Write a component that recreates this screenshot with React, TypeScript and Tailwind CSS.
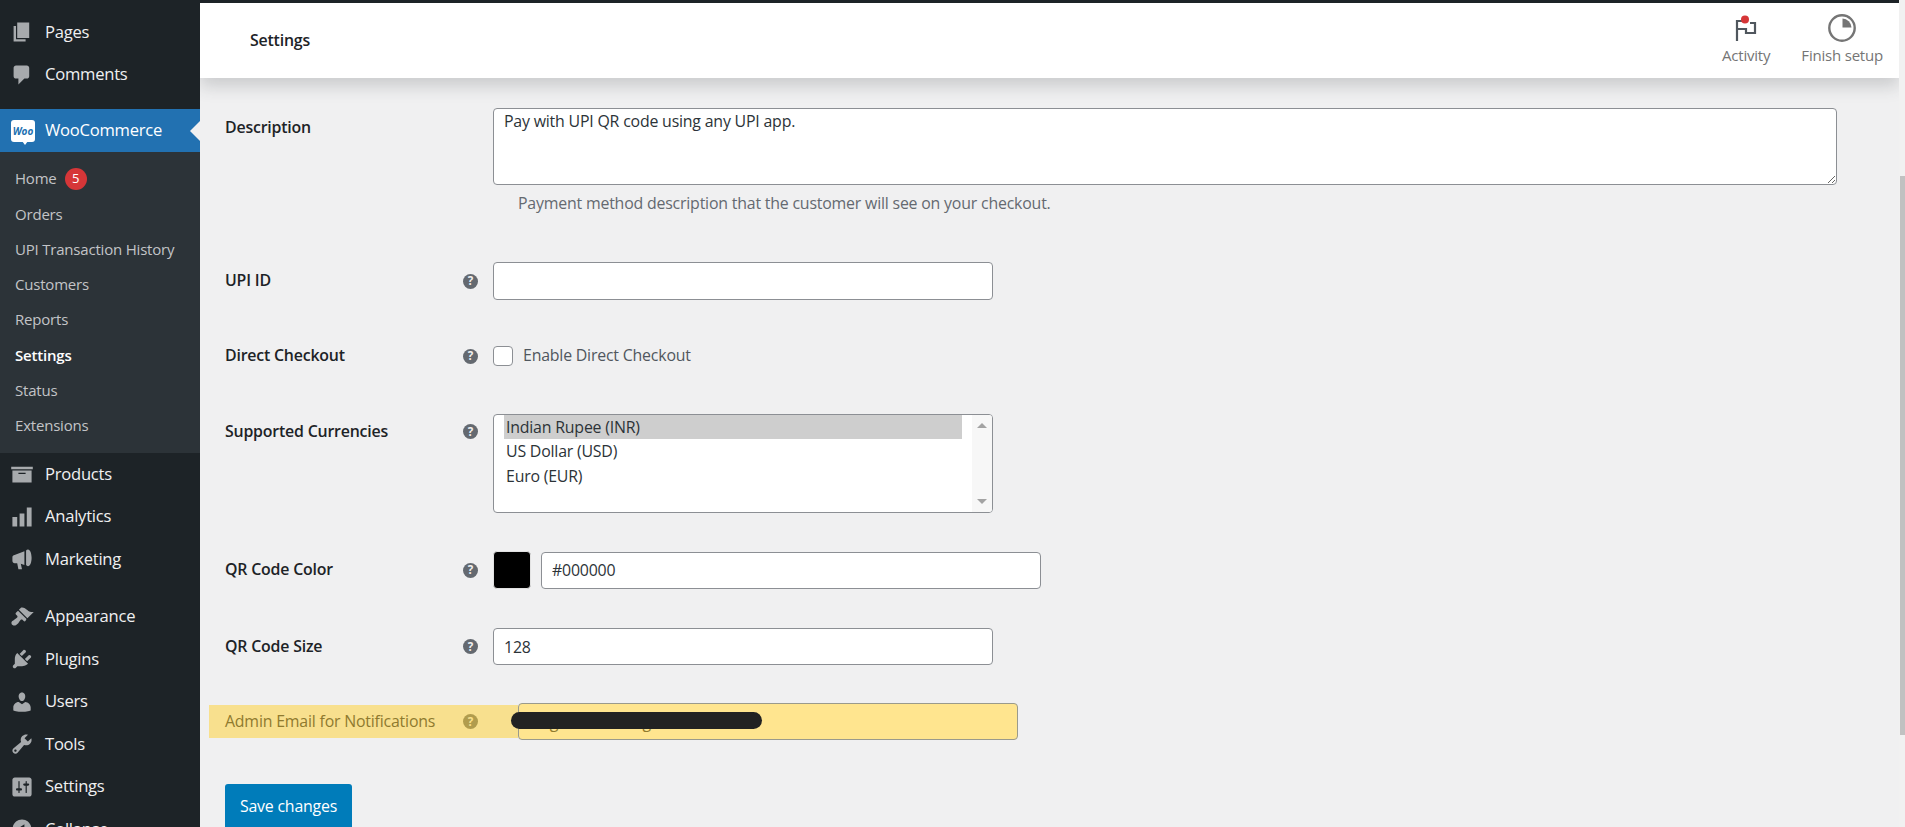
import React from 'react';

const icons: Record<string, string> = {
  pages: 'M6 15V2h10v13H6zm-1 1h8v2H3V5h2v11z',
  comments: 'M5 2h9c1.1 0 2 .9 2 2v7c0 1.1-.9 2-2 2h-2l-5 5v-5H5c-1.1 0-2-.9-2-2V4c0-1.1.9-2 2-2z',
  products: 'M19 4v2H1V4h18zM2 7h16v10H2V7zm11 3V9H7v1h6z',
  analytics: 'M18 18V2h-4v16h4zm-6 0V7H8v11h4zm-6 0v-8H2v8h4z',
  marketing:
    'M2 8.5C2 7.5 2.8 6.700 3.800 6.700L12 3.500V15L9 14l1 4.500H7L6 13.500H3.800C2.800 13.500 2 12.500 2 11.500zM15 2c1.800 0 3 3.200 3 7s-1.200 7-3 7c-.6 0-1.200-.3-1.600-.9V2.900C13.800 2.300 14.400 2 15 2z',
  appearance:
    'M14.48 11.06L7.41 3.99l1.5-1.5c.5-.56 2.3-.47 3.51.32 1.21.8 1.43 1.28 2.91 2.1 1.18.64 2.45 1.26 4.45.85zm-.71.71L6.7 4.7 4.93 6.47c-.39.39-.39 1.02 0 1.41l1.06 1.06c.39.39.39 1.03 0 1.42-.6.6-1.43 1.11-2.21 1.69-.35.26-.7.53-1.01.84C1.43 13.23.99 14.22 1.25 15.5c.1.5.3.88.52 1.06.18.22.56.42 1.06.52 1.28.26 2.27-.18 3.61-1.52.31-.31.58-.66.84-1.01.58-.78 1.09-1.61 1.69-2.21.39-.39 1.03-.39 1.42 0l1.06 1.06c.39.39 1.02.39 1.41 0z',
  plugins:
    'M13.11 4.36L9.87 7.6 8 5.73l3.24-3.24c.35-.34 1.05-.2 1.56.32.52.51.66 1.21.31 1.55zm-8 1.77l.91-1.12 9.01 9.01-1.19.84c-.71.71-2.63 1.16-3.82 1.16H6.14L4.9 17.26c-.59.59-1.54.59-2.12 0-.59-.58-.59-1.53 0-2.12l1.24-1.24v-3.88c0-1.13.4-3.19 1.09-3.89zm7.26 3.97l3.24-3.24c.34-.35 1.04-.21 1.55.31.52.51.66 1.21.31 1.55l-3.24 3.25z',
  users:
    'M10 9.25c-2.27 0-2.73-3.44-2.73-3.44C7 4.02 7.82 2 9.97 2c2.16 0 2.98 2.02 2.71 3.81 0 0-.41 3.44-2.68 3.44zm0 2.57L12.72 10c2.39 0 4.52 2.33 4.52 4.53v2.49s-3.65 1.13-7.24 1.13c-3.65 0-7.24-1.13-7.24-1.13v-2.49c0-2.25 1.94-4.48 4.47-4.48z',
  tools:
    'M16.68 9.77c-1.34 1.34-3.3 1.67-4.95.99l-5.41 6.52c-.99.99-2.59.99-3.58 0s-.99-2.59 0-3.57l6.52-5.42c-.68-1.65-.35-3.61.99-4.95 1.28-1.28 3.12-1.62 4.72-1.06l-2.89 2.89 2.82 2.82 2.86-2.87c.53 1.58.18 3.39-1.08 4.65zM3.81 16.21c.4.39 1.04.39 1.43 0 .4-.4.4-1.04 0-1.43-.39-.4-1.03-.4-1.43 0-.39.39-.39 1.03 0 1.43z',
  settings:
    'M18 16V4c0-1.1-.9-2-2-2H4c-1.1 0-2 .9-2 2v12c0 1.1.9 2 2 2h12c1.1 0 2-.9 2-2zM8 11h1c.55 0 1 .45 1 1s-.45 1-1 1H8v1.5c0 .28-.22.5-.5.5s-.5-.22-.5-.5V13H6c-.55 0-1-.45-1-1s.45-1 1-1h1V5.500c0-.28.22-.5.5-.5s.5.22.5.5V11zm5-2h-1c-.55 0-1-.45-1-1s.45-1 1-1h1V5.500c0-.28.22-.5.5-.5s.5.22.5.5V7h1c.55 0 1 .45 1 1s-.45 1-1 1h-1v5.500c0 .28-.22.5-.5.5s-.5-.22-.5-.5V9z',
  collapse: 'M10 2.160c4.330 0 7.840 3.510 7.840 7.840s-3.510 7.840-7.840 7.840S2.160 14.330 2.160 10 5.670 2.160 10 2.160zM12 14V6l-6 4z',
};

const subItems = ['Orders', 'UPI Transaction History', 'Customers', 'Reports', 'Settings', 'Status', 'Extensions'];

const MenuRow = ({ icon, label }: { icon: string; label: string }) => (
  <div className="flex items-center h-[42.5px] pl-[10px] shrink-0">
    <svg viewBox="0 0 20 20" className="w-[24px] h-[24px] fill-[#a7aaad] shrink-0">
      <path d={icons[icon]} />
    </svg>
    <span className="ml-[11px] text-[16.6px] tracking-[-0.25px] text-[#f0f0f1]">{label}</span>
  </div>
);

const Help = ({ muted }: { muted?: boolean }) => (
  <div className="w-[30px] shrink-0">
    <div
      className={`w-[15px] h-[15px] rounded-full flex items-center justify-center text-[11.5px] leading-none font-bold ${
        muted ? 'bg-[#b19c4d] text-[#f8e08e]' : 'bg-[#646970] text-[#f0f0f1]'
      }`}
    >
      ?
    </div>
  </div>
);

const Label = ({ children }: { children: React.ReactNode }) => (
  <div className="w-[263px] pl-[25px] shrink-0 text-[15.9px] tracking-[-0.2px] font-semibold text-[#1d2327]">{children}</div>
);

const inputClass =
  'w-[500px] h-[37px] px-[10px] rounded-[4px] border border-[#8c8f94] bg-white text-[15.9px] tracking-[-0.2px] text-[#2c3338]';

export default function App() {
  return (
    <div className="flex w-[1905px] h-[827px] overflow-hidden bg-[#f0f0f1] font-['Open_Sans',sans-serif]">
      {/* admin menu */}
      <div className="w-[200px] h-full shrink-0 bg-[#1d2327] pt-[11px] flex flex-col overflow-hidden">
        <MenuRow icon="pages" label="Pages" />
        <MenuRow icon="comments" label="Comments" />
        <div className="relative flex items-center h-[43px] mt-[13px] pl-[11px] bg-[#2271b1] shrink-0">
          <div className="relative w-[24px] h-[22px] rounded-[3px] bg-white flex items-center justify-center text-[10px] leading-none font-bold italic text-[#2271b1]">
            Woo
            <div className="absolute left-[11px] -bottom-[3px] border-x-[3px] border-t-[4px] border-x-transparent border-t-white" />
          </div>
          <span className="ml-[10px] text-[16.6px] tracking-[-0.25px] text-white">WooCommerce</span>
          <div className="absolute right-0 top-[12px] border-y-[10px] border-r-[10px] border-y-transparent border-r-[#f0f0f1]" />
        </div>
        <div className="bg-[#2c3338] pt-[9px] pb-[10px] shrink-0">
          <div className="flex items-center h-[35.25px] pl-[15px] text-[15px] tracking-[-0.2px] text-[#c3c4c7]">
            Home
            <span className="ml-[8px] w-[22px] h-[22px] rounded-full bg-[#d63638] text-white flex items-center justify-center text-[13px]">5</span>
          </div>
          {subItems.map((item) => (
            <div
              key={item}
              className={`flex items-center h-[35.25px] pl-[15px] text-[15px] tracking-[-0.2px] ${
                item === 'Settings' ? 'font-semibold text-white' : 'text-[#c3c4c7]'
              }`}
            >
              {item}
            </div>
          ))}
        </div>
        <MenuRow icon="products" label="Products" />
        <MenuRow icon="analytics" label="Analytics" />
        <MenuRow icon="marketing" label="Marketing" />
        <div className="h-[15px] shrink-0" />
        <MenuRow icon="appearance" label="Appearance" />
        <MenuRow icon="plugins" label="Plugins" />
        <MenuRow icon="users" label="Users" />
        <MenuRow icon="tools" label="Tools" />
        <MenuRow icon="settings" label="Settings" />
        <MenuRow icon="collapse" label="Collapse" />
      </div>

      <div className="flex-1 min-w-0 h-full flex flex-col overflow-hidden">
        <div className="h-[3px] bg-[#1d2327] shrink-0" />
        {/* activity bar */}
        <div className="relative z-10 h-[75px] bg-white shrink-0 flex justify-between pl-[50px] pr-[16px] shadow-[0_8px_16px_rgba(52,55,61,0.2)]">
          <div className="self-center text-[15.9px] tracking-[-0.2px] font-semibold text-[#1d2327]">Settings</div>
          <div className="flex gap-[31px] pt-[12px]">
            <div className="flex flex-col items-center text-[15px] tracking-[-0.2px] text-[#757575]">
              <svg viewBox="0 0 22 26" className="w-[22px] h-[26px]">
                <path d="M2 26V6h6M15 8h5v10h-9v-4H2" fill="none" stroke="#50575e" strokeWidth="2.2" />
                <circle cx="10" cy="4.500" r="4" fill="#d63638" />
              </svg>
              <span className="mt-[3px]">Activity</span>
            </div>
            <div className="flex flex-col items-center text-[15px] tracking-[-0.2px] text-[#757575]">
              <svg viewBox="0 0 28 28" className="w-[28px] h-[28px] -mt-[1px]">
                <circle cx="14" cy="14" r="12.700" fill="none" stroke="#757575" strokeWidth="2.400" />
                <path d="M14.500 4.500a9.500 9.500 0 0 1 9 9h-9z" fill="#757575" />
              </svg>
              <span className="mt-[2px]">Finish setup</span>
            </div>
          </div>
        </div>

        {/* settings form */}
        <div className="flex-1 pt-[30px] text-[#2c3338]">
          <div className="flex items-start">
            <div className="pt-[8px]">
              <Label>Description</Label>
            </div>
            <div className="w-[30px] shrink-0" />
            <textarea
              className="w-[1344px] h-[77px] px-[10px] py-[1px] rounded-[4px] border border-[#8c8f94] bg-white text-[15.9px] tracking-[-0.2px] text-[#2c3338]"
              defaultValue="Pay with UPI QR code using any UPI app."
            />
          </div>
          <div className="ml-[318px] mt-[7px] h-[22px] leading-[22px] text-[15.9px] tracking-[-0.2px] text-[#646970]">
            Payment method description that the customer will see on your checkout.
          </div>

          <div className="flex items-center mt-[48px]">
            <Label>UPI ID</Label>
            <Help />
            <input className={inputClass + ' !h-[38px]'} />
          </div>

          <div className="flex items-center h-[38px] mt-[37px]">
            <Label>Direct Checkout</Label>
            <Help />
            <div className="w-[20px] h-[20px] rounded-[4px] border border-[#8c8f94] bg-white" />
            <span className="ml-[10px] text-[15.9px] tracking-[-0.2px] text-[#50575e]">Enable Direct Checkout</span>
          </div>

          <div className="flex items-start mt-[39px]">
            <div className="pt-[6px] flex items-center">
              <Label>Supported Currencies</Label>
              <Help />
            </div>
            <div className="flex w-[500px] h-[99px] rounded-[4px] border border-[#8c8f94] bg-white overflow-hidden">
              <div className="flex-1 pl-[10px] pr-[10px] text-[15.9px] tracking-[-0.2px] text-[#2c3338]">
                <div className="h-[24px] leading-[24px] px-[2px] bg-[#cecece]">Indian Rupee (INR)</div>
                <div className="h-[25px] leading-[25px] px-[2px]">US Dollar (USD)</div>
                <div className="h-[25px] leading-[25px] px-[2px]">Euro (EUR)</div>
              </div>
              <div className="w-[20px] bg-[#f7f7f7] flex flex-col items-center justify-between py-[8px]">
                <div className="border-x-[5px] border-b-[5px] border-x-transparent border-b-[#a3a3a3]" />
                <div className="border-x-[5px] border-t-[5px] border-x-transparent border-t-[#a3a3a3]" />
              </div>
            </div>
          </div>

          <div className="flex items-center mt-[38px]">
            <Label>QR Code Color</Label>
            <Help />
            <div className="w-[38px] h-[38px] rounded-[4px] border border-[#e2e2e2] bg-black" />
            <input className={inputClass + ' ml-[10px]'} defaultValue="#000000" />
          </div>

          <div className="flex items-center mt-[39px]">
            <Label>QR Code Size</Label>
            <Help />
            <input className={inputClass} defaultValue="128" />
          </div>

          <div className="flex items-center mt-[38px] pl-[9px]">
            <div className="flex items-center w-[309px] h-[33px] bg-[#f8e08e] shrink-0 text-[15.9px] tracking-[-0.2px] font-medium text-[#8f7a2e]">
              <div className="w-[254px] pl-[16px] shrink-0">Admin Email for Notifications</div>
              <Help muted />
            </div>
            <div className="relative">
              <input
                className="block w-[500px] h-[37px] px-[10px] rounded-[4px] border border-[#9a9a8c] bg-[#ffe58f] text-[15.9px] tracking-[-0.2px] text-[#8f7a2e]"
                defaultValue="wegotoadmin@gmail.com"
              />
              <div className="absolute -left-[7px] top-[9px] w-[251px] h-[17px] rounded-full bg-[#222222]" />
            </div>
          </div>

          <button className="block ml-[25px] mt-[44px] w-[127px] h-[46px] rounded-[3px] bg-[#007cba] text-white text-[15.9px] tracking-[-0.2px]">
            Save changes
          </button>
        </div>
      </div>

      {/* page scrollbar */}
      <div className="w-[6px] h-full shrink-0 bg-[#f1f1f1] pt-[176px] pl-[1px]">
        <div className="h-[559px] bg-[#c1c1c1]" />
      </div>
    </div>
  );
}
